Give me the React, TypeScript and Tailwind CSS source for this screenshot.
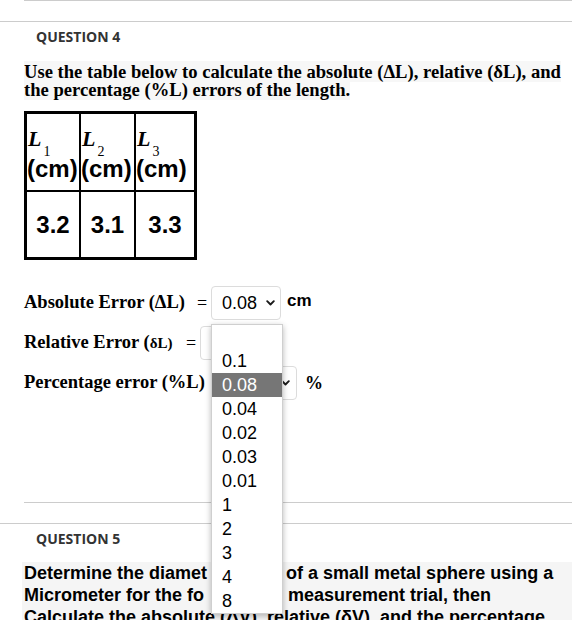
import React from "react";

function Chevron() {
  return (
    <svg width="9" height="6" viewBox="0 0 9 6" className="shrink-0">
      <path d="M1.2 1.2 4.5 4.5 7.8 1.2" fill="none" stroke="#1a1a1a" strokeWidth="1.9" strokeLinecap="round" strokeLinejoin="round" />
    </svg>
  );
}

function HeadCell({ n, last }: { n: string; last?: boolean }) {
  return (
    <div className={"flex flex-col justify-center pl-[1px] border-b-2 border-black " + (last ? "" : "border-r-2")}>
      <div className="leading-[32px] h-[24px] whitespace-nowrap">
        <span className="font-['Liberation_Serif','Times_New_Roman',serif] italic font-bold text-[22px]">L</span>
        <span className="relative top-[10px] font-['Liberation_Serif','Times_New_Roman',serif] text-[14px] ml-[2px]">{n}</span>
      </div>
      <div className="mt-[8px] font-['Liberation_Sans',Arial,sans-serif] font-bold text-[24px] leading-[27px] whitespace-nowrap -ml-[1px]">(cm)</div>
    </div>
  );
}

function DataCell({ v, last }: { v: string; last?: boolean }) {
  return (
    <div className={"flex items-center justify-center font-['Liberation_Sans',Arial,sans-serif] font-bold text-[24px] " + (last ? "" : "border-r-2 border-black")}>
      {v}
    </div>
  );
}

export default function App() {
  const serif = "font-['Liberation_Serif','Times_New_Roman',serif]";
  const sans = "font-['Liberation_Sans',Arial,sans-serif]";
  const label = "font-['Open_Sans',sans-serif] font-bold text-[14px] leading-[20px] text-[#333333]";
  const options = ["", "0.1", "0.08", "0.04", "0.02", "0.03", "0.01", "1", "2", "3", "4", "8"];
  const selectBox = "h-[34px] border border-[#dcdcdc] rounded-[4px] flex items-center pl-[10px] justify-between shrink-0";
  return (
    <div className="relative w-[572px] h-[620px] overflow-hidden bg-white text-black">
      {/* Question 4 */}
      <div className="ml-[24px] h-[21px] border-t border-[#cccccc]" />
      <div className="border-t border-[#cccccc]" />
      <div className={"pl-[36px] pt-[5px] " + label}>QUESTION 4</div>
      <div className="pl-[24px] mt-[16px]">
        <p className={serif + " font-bold text-[18.6px] leading-[18px] whitespace-nowrap"}>
          <span className="bg-[#f7f7f7]">Use the table below to calculate the absolute (ΔL), relative (δL), and</span>
          <br />
          <span className="bg-[#f7f7f7]">the percentage (%L) errors of the length.</span>
        </p>

        <div className="mt-[12px] w-[173px] h-[149px] border-[3px] border-black grid grid-cols-[54px_55px_58px] grid-rows-[78px_65px]">
          <HeadCell n="1" />
          <HeadCell n="2" />
          <HeadCell n="3" last />
          <DataCell v="3.2" />
          <DataCell v="3.1" />
          <DataCell v="3.3" last />
        </div>

        <div className="mt-[26px] flex flex-col gap-[6px]">
          <div className="flex items-center h-[34px]">
            <span className={serif + " font-bold text-[18.5px] w-[169px] whitespace-nowrap"}>Absolute Error (ΔL)</span>
            <span className={serif + " text-[18px] w-[18px] text-center"}>=</span>
            <div className={selectBox + " w-[70px] pr-[5px]"}>
              <span className={sans + " text-[18px]"}>0.08</span>
              <Chevron />
            </div>
            <span className={sans + " font-bold text-[17px] ml-[6px] mb-[4px]"}>cm</span>
          </div>
          <div className="flex items-center h-[34px]">
            <span className={serif + " font-bold text-[18.5px] w-[158px] whitespace-nowrap"}>
              Relative Error (<span className="text-[15px]">δL)</span>
            </span>
            <span className={serif + " text-[18px] w-[18px] text-center"}>=</span>
            <div className={selectBox + " w-[80px] pr-[5px]"}>
              <span className={sans + " text-[18px] text-black"}>0.04</span>
              <Chevron />
            </div>
          </div>
          <div className="flex items-center h-[34px]">
            <span className={serif + " font-bold text-[18.5px] w-[188px] whitespace-nowrap"}>Percentage error (%L)</span>
            <div className={selectBox + " w-[85px] pr-[6px]"}>
              <span className={sans + " text-[18px]"}>4</span>
              <Chevron />
            </div>
            <span className={serif + " font-bold text-[18px] ml-[8px]"}>%</span>
          </div>
        </div>
      </div>

      {/* Question 5 */}
      <div className="absolute left-0 right-0 top-[502px]">
        <div className="ml-[24px] h-[21px] border-t border-[#cccccc]" />
        <div className="border-t border-[#cccccc]" />
        <div className={"pl-[36px] pt-[5px] " + label}>QUESTION 5</div>
        <div className={"mt-[13px] ml-[22px] pl-[2px] bg-[#f5f5f5] " + sans + " font-bold text-[18px] leading-[22px] whitespace-nowrap"}>
          Determine the diamet<span className="inline-block w-[79px] pl-[6px]">er (D)</span>of a small metal sphere using a
          <br />
          Micrometer for the fo<span className="inline-block w-[84px] pl-[10px]">llowing</span>measurement trial, then
          <br />
          Calculate the absolute (ΔV), relative (δV), and the percentage
        </div>
      </div>

      {/* Open dropdown list */}
      <div className="absolute left-[211px] top-[324px] w-[72px] bg-white border border-[#cfcfcf] shadow-[0_2px_6px_rgba(0,0,0,0.28)]">
        {options.map((o, i) => (
          <div
            key={i}
            className={
              sans +
              " h-[24px] leading-[24px] pl-[10px] text-[18px] " +
              (o === "0.08" ? "bg-[#767676] text-white" : "text-black")
            }
          >
            {o}
          </div>
        ))}
      </div>
    </div>
  );
}
